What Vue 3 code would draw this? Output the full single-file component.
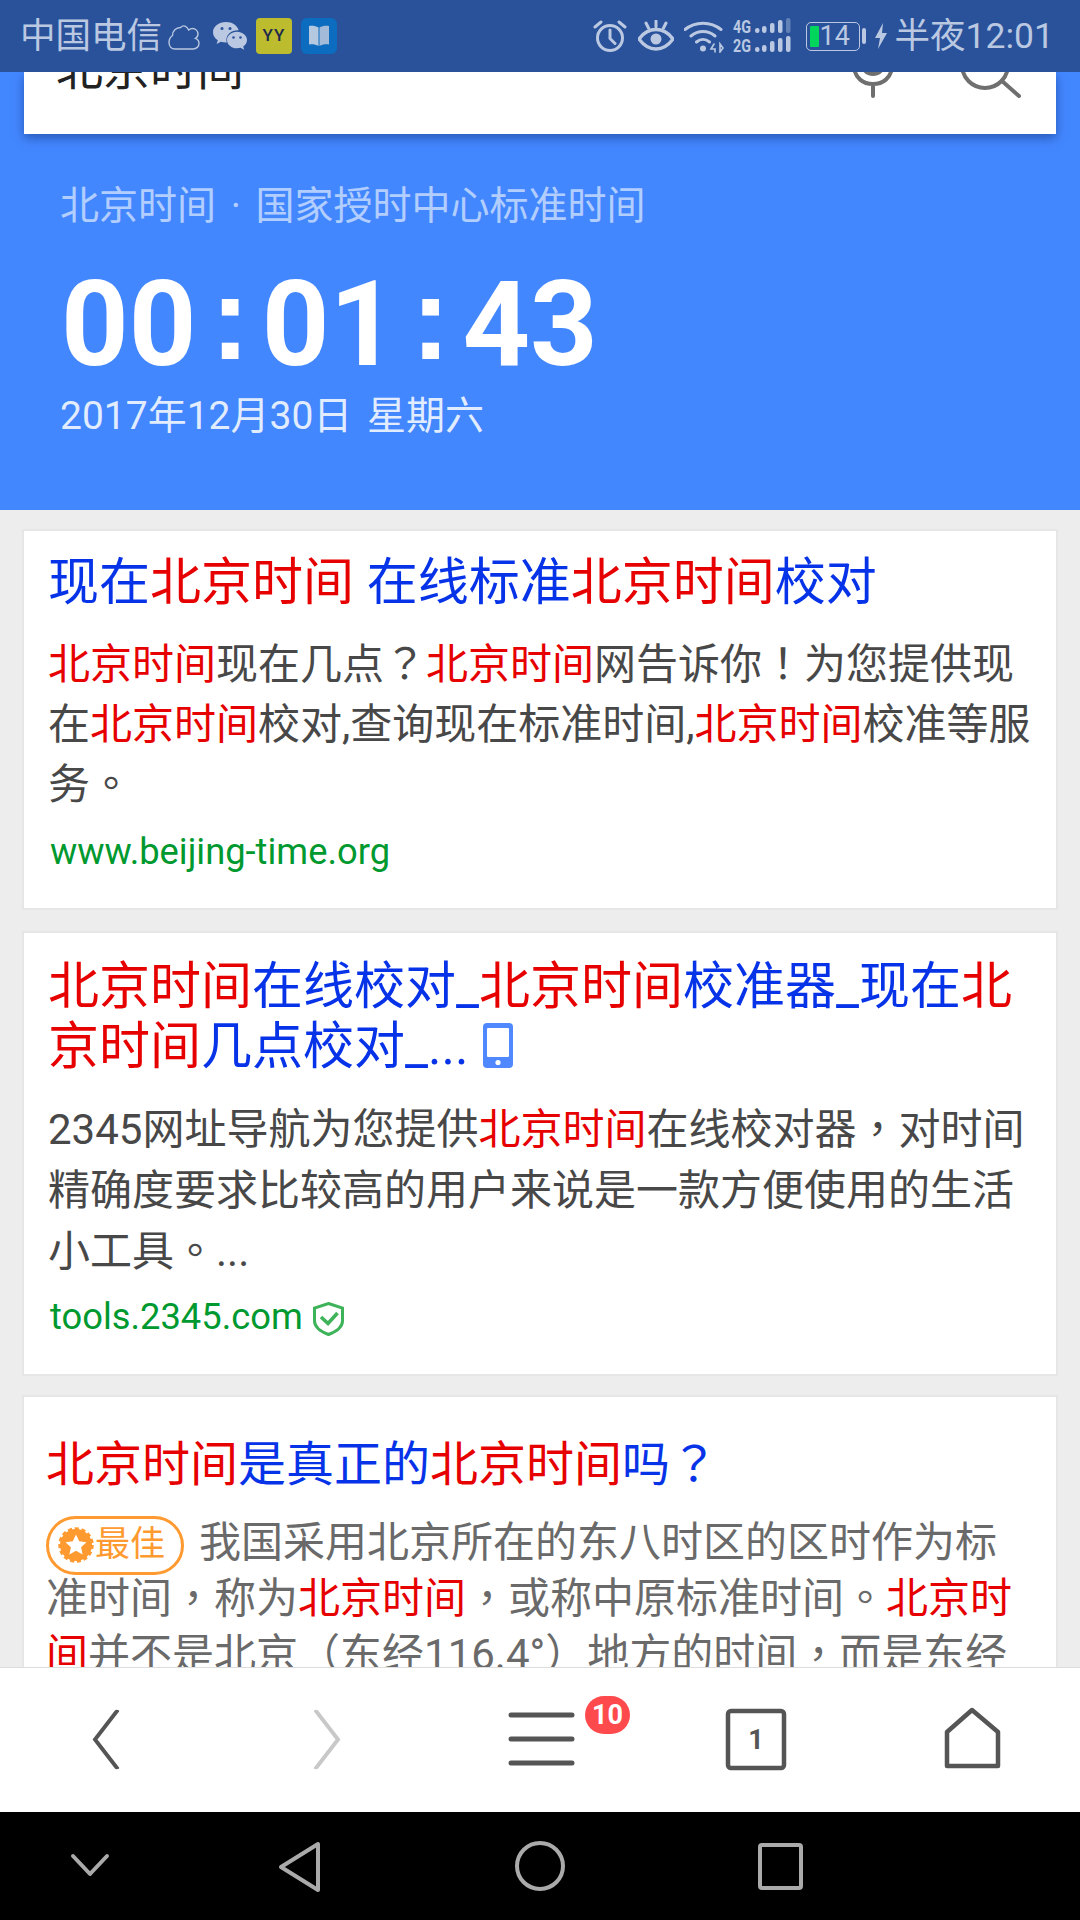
<script setup>
const R = (t) => ({ t, r: true })
const N = (t) => ({ t, r: false })
// Split a run of text so full-width punctuation can take the centred form the reference shows.
const tokens = (list) =>
  list.flatMap(({ t, r }) =>
    t.split(/([，。？！（）])/).filter(Boolean).map((x) => ({ t: x, r, p: /^[，。？！（）]$/.test(x) }))
  )
const card1Title = tokens([N('现在'), R('北京时间'), N(' 在线标准'), R('北京时间'), N('校对')])
const card1Body = tokens([R('北京时间'), N('现在几点？'), R('北京时间'), N('网告诉你！为您提供现在'), R('北京时间'), N('校对,查询现在标准时间,'), R('北京时间'), N('校准等服务。')])
const card2Title = tokens([R('北京时间'), N('在线校对_'), R('北京时间'), N('校准器_现在'), R('北京时间'), N('几点校对_...')])
const card2Body = tokens([N('2345网址导航为您提供'), R('北京时间'), N('在线校对器，对时间精确度要求比较高的用户来说是一款方便使用的生活小工具。...')])
const card3Title = tokens([R('北京时间'), N('是真正的'), R('北京时间'), N('吗？')])
const card3Body = tokens([N('我国采用北京所在的东八时区的区时作为标准时间，称为'), R('北京时间'), N('，或称中原标准时间。'), R('北京时间'), N('并不是北京（东经116.4°）地方的时间，而是东经')])
</script>

<template>
  <div class="screen">
    <header class="status">
      <div class="status-left">
        <span class="carrier">中国电信</span>
        <svg class="ic-cloud" width="32" height="27" viewBox="0 0 32 27" fill="none" stroke="#b9c7e0" stroke-width="1.4">
          <path d="M7 26h18c3.500 0 6-2.500 6-5.500 0-2.500-1.500-4.500-3.500-5.200 1.500-.8 2.500-2.400 2.500-4.300 0-3-2.500-5.500-5.500-5.500-1.500 0-2.800.6-3.800 1.500C18.700 3 15.500 1.500 12.500 4.500 8 4.500 4.500 8 4.500 12.500 2.200 14 1 16.200 1 19.500 1 23.300 3.500 26 7 26z" />
        </svg>
        <svg class="ic-wechat" width="34" height="29" viewBox="0 0 34 29">
          <path d="M13 0C5.800 0 0 4.500 0 10.200c0 3.300 1.900 6.100 4.800 8L3.600 22l4.300-2.300c1.600.5 3.300.8 5.100.8h.8a9 9 0 0 1-.4-2.600c0-5.400 5.100-9.600 11.400-9.600h.9C24.400 3.500 19.100 0 13 0z" fill="#bac8e2" />
          <path d="M34 18c0-4.600-4.500-8.300-10-8.300S14 13.400 14 18s4.500 8.300 10 8.300c1.200 0 2.400-.2 3.500-.5l3.700 2-1-3.200c2.300-1.600 3.800-4 3.800-6.600z" fill="#bac8e2" />
          <circle cx="9" cy="6.500" r="1.500" fill="#2a539b" /><circle cx="17" cy="6.500" r="1.500" fill="#2a539b" />
          <circle cx="20.500" cy="15.500" r="1.300" fill="#2a539b" /><circle cx="27.500" cy="15.500" r="1.300" fill="#2a539b" />
        </svg>
        <span class="ic-yy">YY</span>
        <svg class="ic-book" width="36" height="36" viewBox="0 0 36 36">
          <rect width="36" height="36" rx="6" fill="#0b6cc0" />
          <path d="M8 8c3.500-.5 7 0 9.500 1.500V28C15 26.500 11.500 26 8 26.500z" fill="#b4c8e0" />
          <path d="M28 8c-3.500-.5-7 0-9.500 1.500V28c2.500-1.500 6-2 9.500-1.500z" fill="#a3bad8" />
        </svg>
      </div>
      <div class="status-right">
        <svg width="34" height="34" viewBox="0 0 34 34" fill="none" stroke="#bac8e2" stroke-width="3">
          <circle cx="17" cy="19" r="12.500" /><path d="M17 11v8.500l5 5M2 8l6-5M32 8l-6-5" stroke-linecap="round" />
        </svg>
        <svg class="gap-eye" width="36" height="32" viewBox="0 0 36 32">
          <path d="M1 19C6 12 11 9.500 18 9.500S30 12 35 19c-5 7-10 10-17 10S6 26 1 19z" fill="none" stroke="#bac8e2" stroke-width="3.400" />
          <circle cx="18" cy="19" r="5.500" fill="#bac8e2" />
          <path d="M18 1v6M8 3l2.500 5M28 3l-2.500 5" stroke="#bac8e2" stroke-width="3" stroke-linecap="round" />
        </svg>
        <svg class="gap-wifi" width="40" height="33" viewBox="0 0 40 33" fill="none" stroke="#bac8e2" stroke-width="3" stroke-linecap="round">
          <path d="M1 9.500C11 1 27 1 37 9.500M7 16c7-6 17-6 24 0M12.500 22c4-3.300 9-3.300 13 0" />
          <circle cx="19" cy="28.500" r="3" fill="#bac8e2" stroke="none" />
          <path d="M30 24l-3 5h4v3M36 24v8l3-4z" stroke-width="1.600" />
        </svg>
        <svg class="gap-sig" width="58" height="36" viewBox="0 0 58 36">
          <text x="0" y="15" class="net" textLength="18" lengthAdjust="spacingAndGlyphs">4G</text>
          <text x="0" y="34" class="net" textLength="18" lengthAdjust="spacingAndGlyphs">2G</text>
          <g fill="#bac8e2">
            <rect x="22" y="10" width="4.500" height="5" rx="2.200" /><rect x="29" y="8" width="4.500" height="7" rx="2.200" /><rect x="37" y="5" width="4.500" height="10" rx="2" /><rect x="45" y="2" width="4.500" height="13" rx="2" />
            <rect x="53" y="0" width="4.500" height="15" rx="2" opacity=".4" />
            <rect x="22" y="29" width="4.500" height="5" rx="2.200" /><rect x="29" y="27" width="4.500" height="7" rx="2.200" /><rect x="37" y="23" width="4.500" height="11" rx="2" /><rect x="45" y="20" width="4.500" height="14" rx="2" /><rect x="53" y="18" width="4.500" height="16" rx="2" />
          </g>
        </svg>
        <div class="battery"><i class="battery-fill"></i><span>14</span></div>
        <i class="battery-tip"></i>
        <svg class="gap-bolt" width="12" height="26" viewBox="0 0 12 26"><path d="M8 0L0 15h5l-2 11 9-16H7z" fill="#bac8e2" /></svg>
        <span class="clock-text">半夜12:01</span>
      </div>
    </header>

    <main class="content">
      <div class="hero">
        <div class="search">
          <span class="search-text">北京时间</span>
          <svg class="ic-mic" width="44" height="60" viewBox="0 0 44 60" fill="none" stroke="#6f6f6f" stroke-width="4" stroke-linecap="round">
            <circle cx="22" cy="24" r="11" />
            <path d="M3 28c1 11 9 17 19 17s18-6 19-17M22 45v12" />
          </svg>
          <svg class="ic-search" width="64" height="60" viewBox="0 0 64 60" fill="none" stroke="#6f6f6f" stroke-width="4" stroke-linecap="round">
            <circle cx="28" cy="18" r="23" /><path d="M45 34l17 15" />
          </svg>
        </div>
        <div class="hero-label">北京时间 · 国家授时中心标准时间</div>
        <div class="hero-clock">
          <span>00</span><span class="colon">:</span><span>01</span><span class="colon">:</span><span>43</span>
        </div>
        <div class="hero-date">2017年12月30日&nbsp;星期六</div>
      </div>

      <section class="card card-one">
        <h2 class="title"><span v-for="(s, i) in card1Title" :key="i" :class="{ hit: s.r, punct: s.p }">{{ s.t }}</span></h2>
        <p class="body"><span v-for="(s, i) in card1Body" :key="i" :class="{ hit: s.r, punct: s.p }">{{ s.t }}</span></p>
        <div class="url">www.beijing-time.org</div>
      </section>

      <section class="card card-two">
        <h2 class="title">
          <span v-for="(s, i) in card2Title" :key="i" :class="{ hit: s.r, punct: s.p }">{{ s.t }}</span>
          <svg class="ic-phone" width="30" height="45" viewBox="0 0 30 45">
            <rect width="30" height="45" rx="4" fill="#5089ff" />
            <rect x="4" y="5" width="22" height="29" rx="1" fill="#fff" />
            <circle cx="15" cy="39.500" r="2.600" fill="#fff" />
          </svg>
        </h2>
        <p class="body"><span v-for="(s, i) in card2Body" :key="i" :class="{ hit: s.r, punct: s.p }">{{ s.t }}</span></p>
        <div class="url url-row">
          tools.2345.com
          <svg class="ic-shield" width="31" height="34" viewBox="0 0 31 34" fill="none" stroke="#3fb35a">
            <path d="M15.500 1.500L29.500 6v13c0 6-6 10.500-14 13.500C7.500 29.500 1.500 25 1.500 19V6z" stroke-width="3" />
            <path d="M8 15l7 6.500L24.500 11" stroke-width="3.600" />
          </svg>
        </div>
      </section>

      <section class="card card-three">
        <h2 class="title title-small"><span v-for="(s, i) in card3Title" :key="i" :class="{ hit: s.r, punct: s.p }">{{ s.t }}</span></h2>
        <p class="body body-grey">
          <span class="best">
            <svg width="36" height="36" viewBox="0 0 36 36">
              <circle cx="18" cy="18" r="16" fill="#ff9a30" stroke="#ff9a30" stroke-width="3.500" stroke-dasharray="4 2.700" />
              <path d="M18 7.500l3.200 6.800 7.300.9-5.400 5 1.500 7.300-6.600-3.700-6.600 3.700 1.500-7.300-5.400-5 7.300-.9z" fill="#fff" />
            </svg>
            最佳
          </span>
          <span v-for="(s, i) in card3Body" :key="i" :class="{ hit: s.r, punct: s.p }">{{ s.t }}</span>
        </p>
      </section>
    </main>

    <nav class="toolbar">
      <svg width="1080" height="144" viewBox="0 0 1080 144" fill="none" stroke="#555" stroke-width="4.500" stroke-linecap="round" stroke-linejoin="round">
        <path d="M117 44L95 101l22 57" transform="translate(0 -1) scale(1 .5) translate(0 44)" />
        <path d="M316 44l22 57-22 57" stroke="#c8c8c8" transform="translate(0 -1) scale(1 .5) translate(0 44)" />
        <path d="M511 47h61M511 71h61M511 95h61" stroke-width="5" />
        <rect x="728" y="43" width="56" height="57" rx="3" />
        <path d="M947 64l25-22 26 22v34h-51z" />
      </svg>
      <span class="tab-count">1</span>
      <span class="badge">10</span>
    </nav>

    <footer class="sysnav">
      <svg width="1080" height="108" viewBox="0 0 1080 108" fill="none" stroke="#aaa" stroke-width="4" stroke-linecap="round" stroke-linejoin="round">
        <path d="M73 44l17 18 17-18" />
        <path d="M318 32v46L281 55z" />
        <circle cx="540" cy="54" r="23" />
        <rect x="760" y="33" width="41" height="43" rx="2" />
      </svg>
    </footer>
  </div>
</template>

<style scoped>
.screen {
  width: 1080px;
  height: 1920px;
  display: flex;
  flex-direction: column;
  overflow: hidden;
  font-family: Roboto, "Noto Sans CJK SC", sans-serif;
  background: #ededed;
}
.status {
  height: 72px;
  flex: none;
  background: #29529a;
  color: #bac8e2;
  display: flex;
  justify-content: space-between;
  align-items: center;
  padding: 0 26px 0 20px;
  position: relative;
  z-index: 2;
}
.status-left, .status-right { display: flex; align-items: center; }
.carrier, .clock-text { font-size: 35.500px; line-height: 40px; }
.ic-cloud { margin-left: 6px; }
.ic-wechat { margin-left: 13px; }
.ic-yy {
  margin-left: 9px;
  width: 36px;
  height: 36px;
  border-radius: 4px;
  background: #bcbc2e;
  color: #1d2a4a;
  font-size: 17px;
  font-weight: 500;
  letter-spacing: 1px;
  text-align: center;
  line-height: 34px;
}
.ic-book { margin-left: 9px; }
.gap-eye { margin-left: 11px; }
.gap-wifi { margin-left: 10px; }
.gap-sig { margin-left: 9px; }
.net { font: 700 19px Roboto, sans-serif; fill: #bac8e2; }
.battery {
  margin-left: 15px;
  width: 54px;
  height: 29px;
  box-sizing: border-box;
  border: 1.500px solid #bac8e2;
  border-radius: 5px;
  display: flex;
  align-items: center;
  padding-left: 3px;
  font-size: 27px;
  line-height: 26px;
}
.battery-fill { width: 9px; height: 21px; background: #00d65c; border-radius: 1px; margin-right: 1px; }
.battery-tip { margin-left: 2px; width: 4px; height: 16px; background: #bac8e2; border-radius: 2px; }
.gap-bolt { margin-left: 9px; }
.clock-text { margin-left: 8px; }

.content { flex: none; height: 1596px; overflow: hidden; }
.hero {
  background: #4387ff;
  height: 438px;
  box-sizing: border-box;
  color: #fff;
  padding: 0 0 0 61px;
}
.search {
  margin-left: -37px;
  width: 1032px;
  height: 62px;
  background: #fff;
  box-shadow: 0 4px 10px rgba(20, 50, 120, .55);
  position: relative;
  overflow: hidden;
  display: flex;
  align-items: flex-start;
  padding-left: 32px;
  box-sizing: border-box;
}
.search-text {
  margin-top: -33px;
  font-size: 47px;
  line-height: 60px;
  color: #222;
}
.ic-mic { position: absolute; left: 827px; top: -33px; }
.ic-search { position: absolute; left: 933px; top: -25px; }
.hero-label {
  margin-top: 48px;
  font-size: 39px;
  line-height: 48px;
  color: rgba(255, 255, 255, .6);
  word-spacing: 5px;
  margin-left: -1px;
}
.hero-clock {
  margin-top: 36px;
  display: flex;
  align-items: baseline;
  font-size: 118px;
  font-weight: 700;
  line-height: 116px;
  height: 116px;
}
.colon {
  margin: 0 12px 0 14px;
  position: relative;
  top: -6px;
  font-family: "Liberation Sans", sans-serif;
}
.hero-date {
  margin-top: 10px;
  font-size: 39px;
  line-height: 48px;
  color: rgba(255, 255, 255, .86);
  margin-left: -1px;
  word-spacing: 5px;
}
.card {
  background: #fff;
  margin: 21px 24px 0;
  box-shadow: 0 0 0 2px #e6e6e6;
  padding: 0 20px 0 24px;
  box-sizing: border-box;
}
.card-one { height: 377px; padding-top: 22px; }
.card-two { height: 441px; margin-top: 25px; padding-top: 24px; }
.card-three { margin-top: 23px; padding: 38px 22px 0; }
.title {
  margin: 0;
  font-size: 51px;
  line-height: 60px;
  font-weight: 400;
  color: #0733e8;
}
.title-small { font-size: 48px; }
.hit { color: #e60000; }
.punct { font-family: "Noto Sans CJK TC", sans-serif; line-height: 0; }
.body {
  margin: 22px 0 0;
  font-size: 42px;
  line-height: 61px;
  color: #484848;
}
.card-one .body { line-height: 60px; }
.body-grey { color: #6a6a6a; line-height: 56px; margin-top: 20px; }
.url {
  margin-top: 12px;
  padding-left: 2px;
  font-size: 36.300px;
  line-height: 44px;
  color: #00992f;
}
.card-one .url { margin-top: 15px; }
.url-row { display: flex; align-items: center; margin-top: 13px; }
.ic-shield { margin-left: 10px; margin-top: 4px; }
.ic-phone { vertical-align: -4px; margin-left: 15px; }
.best {
  display: inline-flex;
  align-items: center;
  box-sizing: border-box;
  width: 138px;
  height: 59px;
  margin: -8px 15px -8px 0;
  vertical-align: -6px;
  border: 3px solid #ff9a30;
  border-radius: 30px;
  padding-left: 9px;
  font-size: 35px;
  color: #ff9a30;
}
.best svg { margin-right: 1px; flex: none; }

.toolbar {
  position: relative;
  height: 144px;
  flex: none;
  background: #fff;
  box-shadow: 0 -1px 0 #ddd;
}
.toolbar svg { display: block; }
.tab-count {
  position: absolute;
  left: 727px;
  top: 43px;
  width: 58px;
  text-align: center;
  font-size: 27px;
  line-height: 58px;
  font-weight: 700;
  color: #555;
}
.badge {
  position: absolute;
  left: 585px;
  top: 28px;
  width: 45px;
  height: 38px;
  border-radius: 19px;
  background: #ff4a4d;
  color: #fff;
  font-size: 27px;
  font-weight: 700;
  line-height: 38px;
  text-align: center;
}
.sysnav { height: 108px; flex: none; background: #000; }
.sysnav svg { display: block; }
</style>

<style>
html, body { margin: 0; background: #000; }
</style>
